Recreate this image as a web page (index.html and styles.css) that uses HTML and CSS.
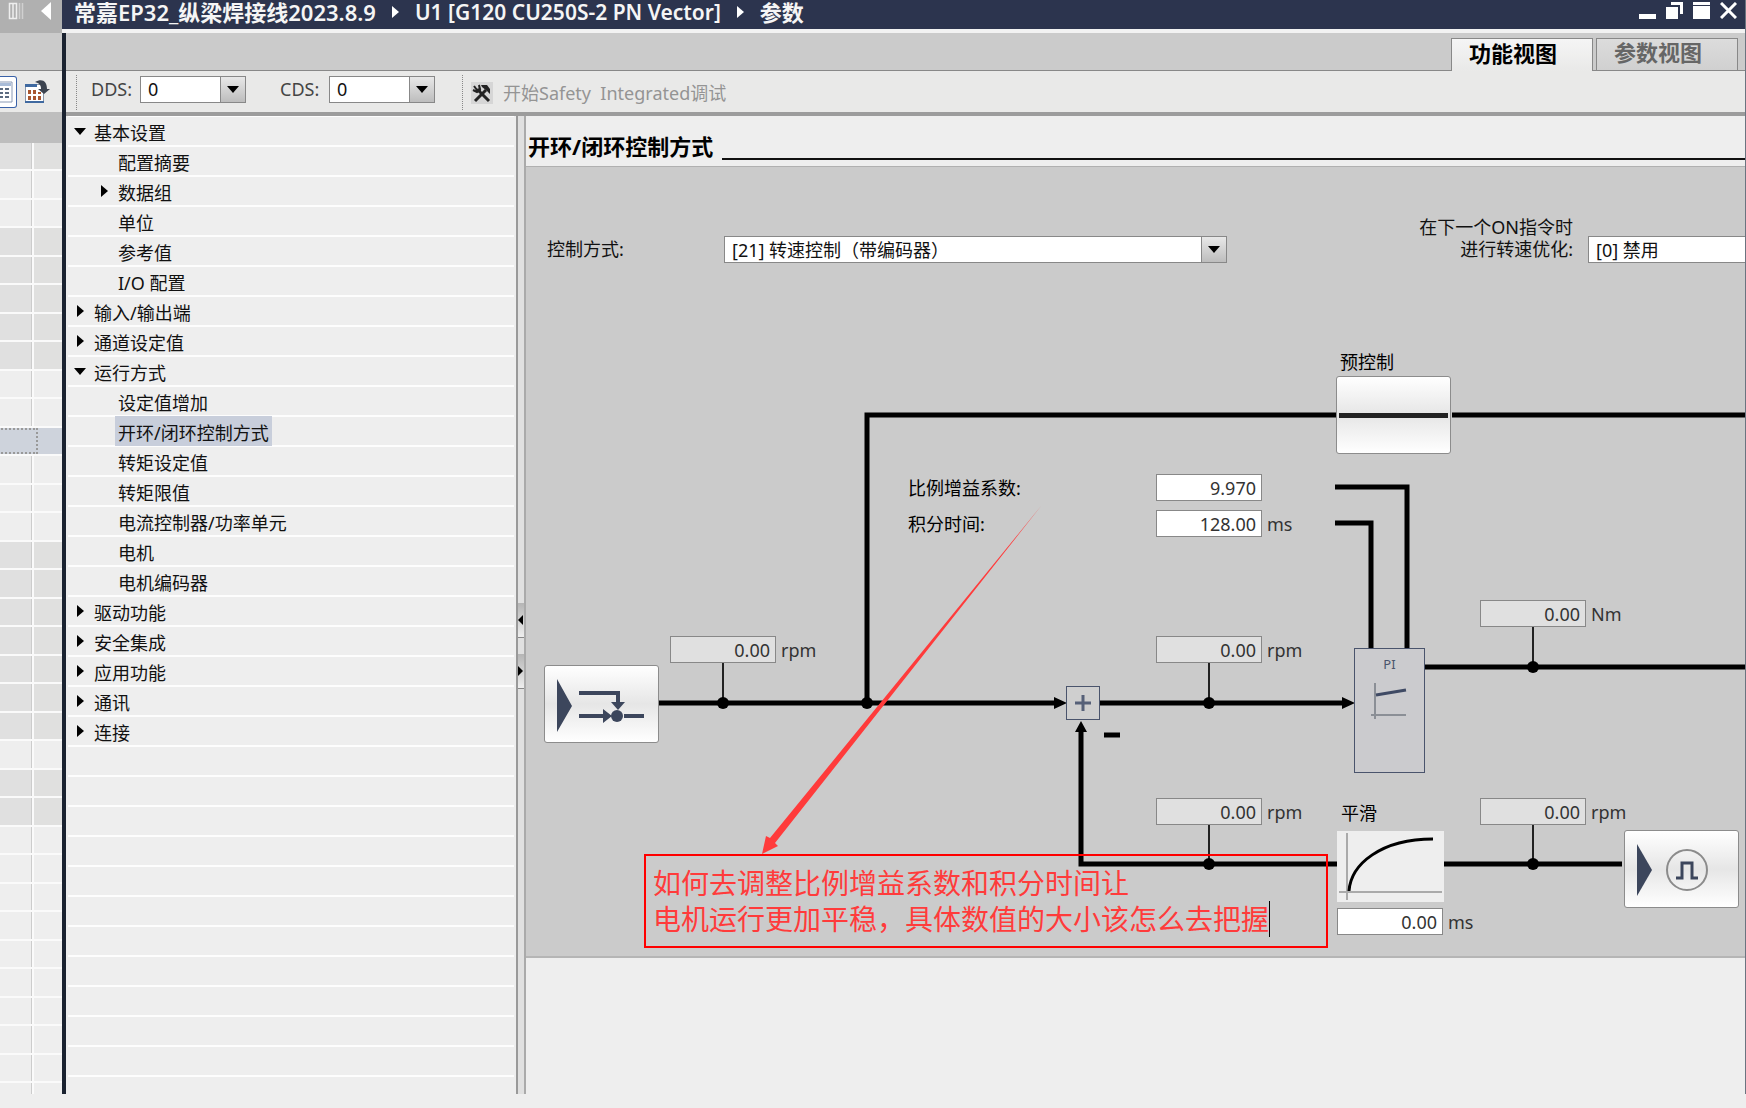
FILE: index.html
```html
<!DOCTYPE html>
<html lang="zh-CN">
<head>
    <meta charset="UTF-8">
    <meta name="viewport" content="width=device-width, initial-scale=1.0">
    <title>参数</title>
    <link rel="stylesheet" href="styles.css">
</head>
<body>
    <aside class="project">
        <div class="project-head">
            <svg width="18" height="18" viewBox="0 0 18 18"><path d="M1.500 1.500h7v15h-7zM5 2v14" fill="none" stroke="#eee" stroke-width="1.500"/><path d="M11.500 1v16M14.500 1v16" stroke="#d0d0d0" stroke-width="1.500"/></svg>
            <svg width="12" height="18" viewBox="0 0 12 18"><path d="M11 0v18L1 9z" fill="#fff"/></svg>
        </div>
        <div class="project-band"></div>
        <div class="project-tools">
            <button class="tool-btn tool-active" aria-label="列表">
                <svg width="14" height="22" viewBox="0 0 14 22"><path d="M-6 1h18v20h-18z" fill="#fff" stroke="#8a9ab5"/><path d="M-6 2h17v3h-17z" fill="#a9bcd8"/><path d="M0 8h3M5 8h4M0 12h3M5 12h4M0 16h3M5 16h4" stroke="#5c6b80" stroke-width="2"/></svg>
            </button>
            <button class="tool-btn" aria-label="概览">
                <svg width="26" height="26" viewBox="0 0 26 26"><path d="M1.500 5.500h18v18h-18z" fill="#fff" stroke="#8a97aa"/><path d="M1 5h12v3H1z" fill="#3f69a0"/><path d="M1 22h19v2H1z" fill="#3f69a0"/><path d="M4 11h3v4H4zM9 11h3v4H9zM14 13h3v2h-3zM4 17h3v4H4zM9 17h3v4H9zM14 17h3v4h-3z" fill="#a8562f"/><path d="M11 3c7-4 12-1 12 7h3l-6 5-6-5h3c0-4-2-6-6-7z" fill="#3c4450"/></svg>
            </button>
        </div>
        <div class="project-title"></div>
        <ul class="project-rows">
            <li class="dark"></li><li></li><li></li>
            <li class="dark"></li><li class="dark"></li><li class="dark"></li><li class="dark"></li><li class="dark"></li>
            <li></li><li></li><li class="current"></li><li></li><li></li><li></li>
            <li class="dark"></li><li class="dark"></li><li class="dark"></li><li class="dark"></li><li class="dark"></li><li class="dark"></li><li class="dark"></li>
            <li></li><li class="dark"></li><li class="dark"></li>
            <li></li><li></li><li></li><li></li><li></li><li></li><li></li><li></li><li></li>
        </ul>
    </aside>

    <main class="editor">
        <header class="titlebar">
            <nav class="crumbs">
                <span>常嘉EP32_纵梁焊接线2023.8.9</span>
                <i></i>
                <span class="device">U1 [G120 CU250S-2 PN Vector]</span>
                <i></i>
                <span>参数</span>
            </nav>
            <div class="win-btns">
                <button aria-label="最小化"><svg width="17" height="17"><path d="M0 12h17v5H0z" fill="#fff"/></svg></button>
                <button aria-label="还原"><svg width="17" height="17"><path d="M0 5h12v12H0zM5 0h12v12h-3V3H5z" fill="#fff"/></svg></button>
                <button aria-label="最大化"><svg width="17" height="17"><path d="M0 0h17v3H0zM0 4h17v13H0z" fill="#fff"/></svg></button>
                <button aria-label="关闭"><svg width="17" height="17"><path d="M1 1l15 15M16 1L1 16" stroke="#fff" stroke-width="3"/></svg></button>
            </div>
        </header>

        <div class="tabs">
            <button class="tab tab-active">功能视图</button>
            <button class="tab">参数视图</button>
        </div>

        <div class="toolbar">
            <div class="tool-group">
                <label for="dds">DDS:</label>
                <div class="select"><select id="dds"><option>0</option></select></div>
            </div>
            <div class="tool-group no-sep">
                <label for="cds">CDS:</label>
                <div class="select"><select id="cds"><option>0</option></select></div>
            </div>
            <button class="safety" disabled>
                <svg width="22" height="22" viewBox="0 0 22 22"><path d="M0 0h22v22H0z" fill="#d6d6d6"/><path d="M7 8l11 11" stroke="#222" stroke-width="3"/><path d="M3 4l3 4 3-1-1-4M8 3l1 5-3 2-4-2" stroke="#222" stroke-width="2" fill="none"/><path d="M15 8L4 19" stroke="#222" stroke-width="3"/><path d="M10 3h6l3 4v5l-3-3-5-4z" fill="#222"/></svg>
                <span>开始Safety&nbsp; Integrated调试</span>
            </button>
        </div>

        <div class="work">
            <ul class="tree">
                <li class="open"><a href="#">基本设置</a>
                    <ul>
                        <li><a href="#">配置摘要</a></li>
                        <li class="closed"><a href="#">数据组</a></li>
                        <li><a href="#">单位</a></li>
                        <li><a href="#">参考值</a></li>
                        <li><a href="#">I/O 配置</a></li>
                    </ul>
                </li>
                <li class="closed"><a href="#">输入/输出端</a></li>
                <li class="closed"><a href="#">通道设定值</a></li>
                <li class="open"><a href="#">运行方式</a>
                    <ul>
                        <li><a href="#">设定值增加</a></li>
                        <li><a href="#" class="selected">开环/闭环控制方式</a></li>
                        <li><a href="#">转矩设定值</a></li>
                        <li><a href="#">转矩限值</a></li>
                        <li><a href="#">电流控制器/功率单元</a></li>
                        <li><a href="#">电机</a></li>
                        <li><a href="#">电机编码器</a></li>
                    </ul>
                </li>
                <li class="closed"><a href="#">驱动功能</a></li>
                <li class="closed"><a href="#">安全集成</a></li>
                <li class="closed"><a href="#">应用功能</a></li>
                <li class="closed"><a href="#">通讯</a></li>
                <li class="closed"><a href="#">连接</a></li>
            </ul>

            <div class="splitter">
                <button aria-label="向左折叠"><svg width="5" height="10"><path d="M5 0v10L0 5z"/></svg></button>
                <button aria-label="向右折叠"><svg width="5" height="10"><path d="M0 0v10l5-5z"/></svg></button>
            </div>

            <section class="page">
                <div class="page-head"><h1>开环/闭环控制方式</h1></div>

                <div class="panel">
                    <div class="mode-row">
                        <label class="mode-label" for="mode">控制方式:</label>
                        <div class="select mode-select"><select id="mode"><option>[21] 转速控制（带编码器）</option></select></div>
                        <label class="opt-label" for="opt">在下一个ON指令时<br>进行转速优化:</label>
                        <div class="select opt-select"><select id="opt"><option>[0] 禁用</option></select></div>
                    </div>

                    <div class="diagram">
                        <!-- signal lines -->
                        <svg class="wires" width="100%" height="693">
                            <g fill="none" stroke="#000" stroke-width="5">
                                <path d="M341 440V152H810M926 152H4000"/>
                                <path d="M809 224H881V386M809 260H845V386"/>
                                <path d="M133 440H530M574 440H818"/>
                                <path d="M555 468V601H812M918 601H1096"/>
                                <path d="M899 404H4000"/>
                                <path d="M578 472H594"/>
                            </g>
                            <path d="M528 434l13 6-13 6zM816 434l13 6-13 6zM549 469l6-11 6 11z"/>
                            <path d="M197 400V440M683 400V440M683 562V601M1007 364V404M1007 562V601" stroke="#222" stroke-width="2"/>
                            <circle cx="197" cy="440" r="6"/><circle cx="341" cy="440" r="6"/>
                            <circle cx="683" cy="440" r="6"/><circle cx="683" cy="601" r="6"/>
                            <circle cx="1007" cy="404" r="6"/><circle cx="1007" cy="601" r="6"/>
                        </svg>

                        <button class="block b-setpoint" aria-label="设定值">
                            <svg width="113" height="76"><g fill="#3c465c"><path d="M12 13l15 27-15 26zM66 36h14l-7 8zM58 43l9 7-9 7z"/><circle cx="72" cy="50" r="6"/></g><path d="M34 27H73V37M34 50H59M79 50H99" fill="none" stroke="#3c465c" stroke-width="4"/></svg>
                        </button>

                        <span class="caption c-pre">预控制</span>
                        <button class="block b-pre" aria-label="预控制"></button>

                        <label class="caption c-gain" for="gain">比例增益系数:</label>
                        <div class="value v-gain"><input id="gain" value="9.970"></div>
                        <label class="caption c-time" for="time">积分时间:</label>
                        <div class="value v-time"><input id="time" value="128.00">ms</div>

                        <div class="value v-ref"><input value="0.00" aria-label="设定转速" readonly>rpm</div>
                        <div class="value v-err"><input value="0.00" aria-label="转速偏差" readonly>rpm</div>
                        <div class="value v-torque"><input value="0.00" aria-label="转矩" readonly>Nm</div>
                        <div class="value v-act"><input value="0.00" aria-label="平滑后转速" readonly>rpm</div>
                        <div class="value v-enc"><input value="0.00" aria-label="编码器转速" readonly>rpm</div>

                        <div class="sum"><svg width="18" height="18"><path d="M1 9h16M9 1v16" stroke="#566078" stroke-width="3"/></svg></div>

                        <div class="pi">
                            <span>PI</span>
                            <svg width="42" height="36"><path d="M6 0v36M2 32h35" stroke="#8b8f96" stroke-width="2"/><path d="M7 12l30-5" stroke="#3f4a64" stroke-width="3"/></svg>
                        </div>

                        <label class="caption c-smooth" for="smooth">平滑</label>
                        <svg class="curve" width="107" height="71"><path d="M10 2v67M2 61h103" stroke="#aaa" stroke-width="2"/><path d="M12 60C14 33 44 8 96 8" fill="none" stroke="#000" stroke-width="3"/></svg>
                        <div class="value v-smooth"><input id="smooth" value="0.00">ms</div>

                        <button class="block b-encoder" aria-label="编码器">
                            <svg width="113" height="76"><path d="M12 13l15 26-15 26z" fill="#3c465c"/><circle cx="62" cy="39" r="20" fill="none" stroke="#8b8b8b" stroke-width="2"/><path d="M51 47h6V32h10v15h6" fill="none" stroke="#3c465c" stroke-width="3"/></svg>
                        </button>

                        <!-- reviewer's note -->
                        <div class="note" contenteditable="true" spellcheck="false">如何去调整比例增益系数和积分时间让<br>电机运行更加平稳，具体数值的大小该怎么去把握<i></i></div>
                        <svg class="wires arrow" width="100%" height="693"><path d="M515 243L244 575l-4-2-4 18 16-8-3-3z" fill="#ff3b3b"/></svg>
                    </div>
                </div>
            </section>
        </div>
    </main>
</body>
</html>
```

FILE: styles.css
```css
* {
    box-sizing: border-box;
}
body {
    margin: 0;
    min-height: 100vh;
    padding-bottom: 14px;
    display: flex;
    background: #eee;
    color: #111;
    font-family: "Noto Sans", "Noto Sans CJK SC", sans-serif;
    font-size: 18px;
    line-height: 22px;
    overflow: hidden;
}
ul {
    list-style: none;
    margin: 0;
    padding: 0;
}
button {
    padding: 0;
    border: none;
    background: none;
    font: inherit;
    color: inherit;
}
svg {
    display: block;
}

/* project strip on the left */
.project {
    width: 62px;
    flex: none;
    display: flex;
    flex-direction: column;
}
.project-head {
    height: 33px;
    padding: 2px 10px 0 8px;
    display: flex;
    justify-content: space-between;
    background: #b0b0b0;
}
.project-band {
    height: 38px;
    background: #cbcbcb;
    border-bottom: 1px solid #888;
}
.project-tools {
    height: 41px;
    display: flex;
    align-items: center;
    gap: 7px;
    background: #e9e9e8;
}
.tool-active {
    width: 17px;
    height: 32px;
    display: flex;
    align-items: center;
    background: #fff;
    border: 1px solid #3a62a8;
    border-left: none;
    border-radius: 0 3px 3px 0;
}
.project-title {
    height: 31px;
    background: #bebebe;
}
.project-rows {
    flex: 1;
    display: flex;
    flex-direction: column;
    padding-bottom: 11px;
    background: linear-gradient(to right, transparent 31px, #ccc 31px, #ccc 32px, #fafafa 32px, #fafafa 34px, transparent 34px);
}
.project-rows li {
    flex: 1;
    border-bottom: 2px solid #fafafa;
    background: linear-gradient(to right, #eee 31px, #ccc 31px, #ccc 32px, #fafafa 32px, #fafafa 34px, #eee 34px);
}
.project-rows .dark {
    background: linear-gradient(to right, #e0e0e0 31px, #ccc 31px, #ccc 32px, #fafafa 32px, #fafafa 34px, #e0e0df 34px);
}
.project-rows .current {
    background: #ced3dc;
    position: relative;
}
.project-rows .current::before {
    content: "";
    position: absolute;
    top: 0;
    bottom: 0;
    left: -2px;
    width: 36px;
    border: 2px dotted #999;
}

/* editor window */
.editor {
    flex: 1;
    min-width: 0;
    display: flex;
    flex-direction: column;
    border-left: 4px solid #1a2230;
    border-right: 1px solid #6b7480;
}
.titlebar {
    height: 33px;
    flex: none;
    margin-left: -4px;
    padding: 0 8px 0 12px;
    display: flex;
    justify-content: space-between;
    background: #2c344e;
    border-bottom: 4px solid #f2f2f2;
    color: #f5f5f5;
}
.crumbs {
    display: flex;
    align-items: center;
    height: 24px;
    font-size: 22px;
    font-weight: 600;
    white-space: nowrap;
}
.crumbs .device {
    font-size: 21px;
}
.crumbs i {
    margin: 0 16px;
    border: 6px solid transparent;
    border-left: 7px solid #fff;
    border-right: none;
}
.win-btns {
    display: flex;
    gap: 10px;
    padding-top: 2px;
    align-items: flex-start;
}
.tabs {
    height: 38px;
    flex: none;
    padding: 5px 7px 0 0;
    display: flex;
    justify-content: flex-end;
    gap: 3px;
    background: #cbcbcb;
    box-shadow: inset 0 -1px #888;
}
.tab {
    width: 142px;
    padding: 0 0 5px 17px;
    border: 1px solid #888;
    background: linear-gradient(#dcdcdc, #d0d0d0);
    color: #666;
    font-size: 22px;
    font-weight: 700;
    text-align: left;
}
.tab-active {
    border-bottom: none;
    background: linear-gradient(#f5f5f5, #e9e9e8);
    color: #000;
}
.toolbar {
    height: 45px;
    flex: none;
    padding-left: 10px;
    display: flex;
    align-items: flex-start;
    background: #e9e9e8;
    border-bottom: 4px solid #9c9c9c;
}
.tool-group,
.safety {
    height: 35px;
    margin-top: 4px;
    display: flex;
    align-items: center;
    border-left: 1px dotted #888;
}
.tool-group {
    padding: 0 0 7px 14px;
}
.tool-group label {
    width: 49px;
    color: #444;
}
.tool-group .select {
    width: 106px;
}
.no-sep {
    border-left: none;
    margin: 4px 27px 0 20px;
}
.safety {
    padding-left: 8px;
    gap: 10px;
    color: #949494;
}

/* drop-down */
.select {
    position: relative;
    height: 27px;
}
.select select {
    appearance: none;
    width: 100%;
    height: 100%;
    padding: 0 26px 0 7px;
    border: 1px solid #888;
    border-radius: 0;
    background: #fff;
    color: #111;
    font: inherit;
    line-height: 22px;
}
.select::before {
    content: "";
    position: absolute;
    top: 1px;
    right: 1px;
    bottom: 1px;
    width: 24px;
    border-left: 1px solid #888;
    background: linear-gradient(#e8e8e8, #bdbdbd);
    pointer-events: none;
}
.select::after {
    content: "";
    position: absolute;
    top: 10px;
    right: 7px;
    border: 6px solid transparent;
    border-top: 7px solid #000;
    border-bottom: none;
    pointer-events: none;
}

/* function tree */
.work {
    flex: 1;
    display: flex;
    min-height: 0;
}
.tree {
    width: 450px;
    flex: none;
    background: linear-gradient(#eee 28px, #fdfdfd 28px) 2px 1px / 446px 30px repeat-y;
}
.tree li {
    position: relative;
}
.tree a {
    display: block;
    width: max-content;
    height: 30px;
    margin-left: 25px;
    padding: 2px 3px 0;
    line-height: 30px;
    color: #111;
    text-decoration: none;
}
.tree ul a {
    margin-left: 49px;
}
.tree .selected {
    background: #c8cedb;
}
.open::before,
.closed::before {
    content: "";
    position: absolute;
    top: 9px;
    left: 11px;
    border: 6px solid transparent;
    border-left: 7px solid #000;
    border-right: none;
}
.open::before {
    top: 12px;
    left: 8px;
    border: 6px solid transparent;
    border-top: 7px solid #000;
    border-bottom: none;
}
.tree ul .closed::before {
    left: 35px;
}
.splitter {
    width: 10px;
    flex: none;
    display: flex;
    flex-direction: column;
    gap: 16px;
    padding-top: 487px;
    background: #e0e0e0;
    border-left: 2px solid #999;
    border-right: 2px solid #aaa;
}
.splitter button {
    height: 35px;
    display: flex;
    align-items: center;
    background: linear-gradient(#b5b5b5, #eee);
    border-bottom: 1px solid #888;
}

/* parameter page */
.page {
    flex: 1;
    min-width: 0;
}
.page-head {
    height: 50px;
    padding: 0 0 6px 2px;
    display: flex;
    align-items: flex-end;
    gap: 9px;
}
.page-head h1 {
    margin: 0;
    padding-bottom: 3px;
    font-size: 22px;
    line-height: 22px;
    font-weight: 700;
    color: #000;
}
.page-head::after {
    content: "";
    flex: 1;
    height: 2px;
    background: #111;
}
.panel {
    background: #cbcbcb;
    border-top: 1px solid #b0b0b0;
    border-bottom: 2px solid #b5b5b5;
    overflow: hidden;
}
.mode-row {
    padding: 49px 0 0 21px;
    display: flex;
    align-items: flex-end;
}
.mode-label {
    width: 177px;
    padding-bottom: 3px;
}
.mode-select {
    width: 503px;
}
.opt-label {
    margin-left: auto;
    padding: 0 15px 3px 0;
    text-align: right;
}
.opt-select {
    width: 157px;
    overflow: hidden;
}
.opt-select select {
    width: 190px;
}
.opt-select::before,
.opt-select::after {
    display: none;
}

/* control loop diagram, nodes sit on a free canvas */
.diagram {
    position: relative;
    height: 693px;
}
.wires {
    position: absolute;
    top: 0;
    left: 0;
}
.arrow {
    pointer-events: none;
}
.block,
.caption,
.value,
.sum,
.pi,
.curve,
.note {
    position: absolute;
}
.block {
    width: 115px;
    height: 78px;
    border: 1px solid #8c8c8c;
    border-radius: 3px;
    background: linear-gradient(#fff, #e6e6e6 50%, #fff);
}
.b-setpoint { left: 18px; top: 402px; }
.b-pre { left: 810px; top: 113px; }
.b-pre::after {
    content: "";
    display: block;
    height: 5px;
    margin: 0 2px;
    background: #222;
}
.b-encoder { left: 1098px; top: 567px; }
.caption {
    white-space: nowrap;
    color: #000;
}
.c-pre { left: 814px; top: 88px; }
.c-gain { left: 382px; top: 214px; }
.c-time { left: 382px; top: 250px; }
.c-smooth { left: 815px; top: 539px; }
.value {
    display: flex;
    align-items: center;
    gap: 5px;
    color: #333;
}
.value input {
    width: 106px;
    height: 27px;
    padding: 0 5px;
    border: 1px solid #888;
    background: #fff;
    color: #333;
    font: inherit;
    text-align: right;
}
.value input:read-only {
    background: #e0e0e0;
}
.v-gain { left: 630px; top: 211px; }
.v-time { left: 630px; top: 247px; }
.v-ref { left: 144px; top: 373px; }
.v-err { left: 630px; top: 373px; }
.v-torque { left: 954px; top: 337px; }
.v-act { left: 630px; top: 535px; }
.v-enc { left: 954px; top: 535px; }
.v-smooth { left: 811px; top: 645px; }
.sum {
    left: 540px;
    top: 423px;
    width: 34px;
    height: 34px;
    display: flex;
    align-items: center;
    justify-content: center;
    border: 1px solid #4a546c;
    background: #cfcfcf;
}
.pi {
    left: 828px;
    top: 385px;
    width: 71px;
    height: 125px;
    display: flex;
    flex-direction: column;
    align-items: center;
    gap: 8px;
    padding-top: 4px;
    border: 1px solid #4a546c;
    background: #cbcbce;
    color: #4a546c;
    font-size: 13px;
}
.curve {
    left: 811px;
    top: 568px;
    background: #eee;
}
.note {
    left: 118px;
    top: 591px;
    width: 684px;
    height: 94px;
    padding: 9px 7px;
    border: 2px solid #f00;
    color: #ff3b3b;
    font-size: 28px;
    font-weight: 400;
    line-height: 36px;
    white-space: nowrap;
    outline: none;
}
.note i {
    display: inline-block;
    width: 1px;
    height: 36px;
    vertical-align: top;
    background: #000;
}
```
